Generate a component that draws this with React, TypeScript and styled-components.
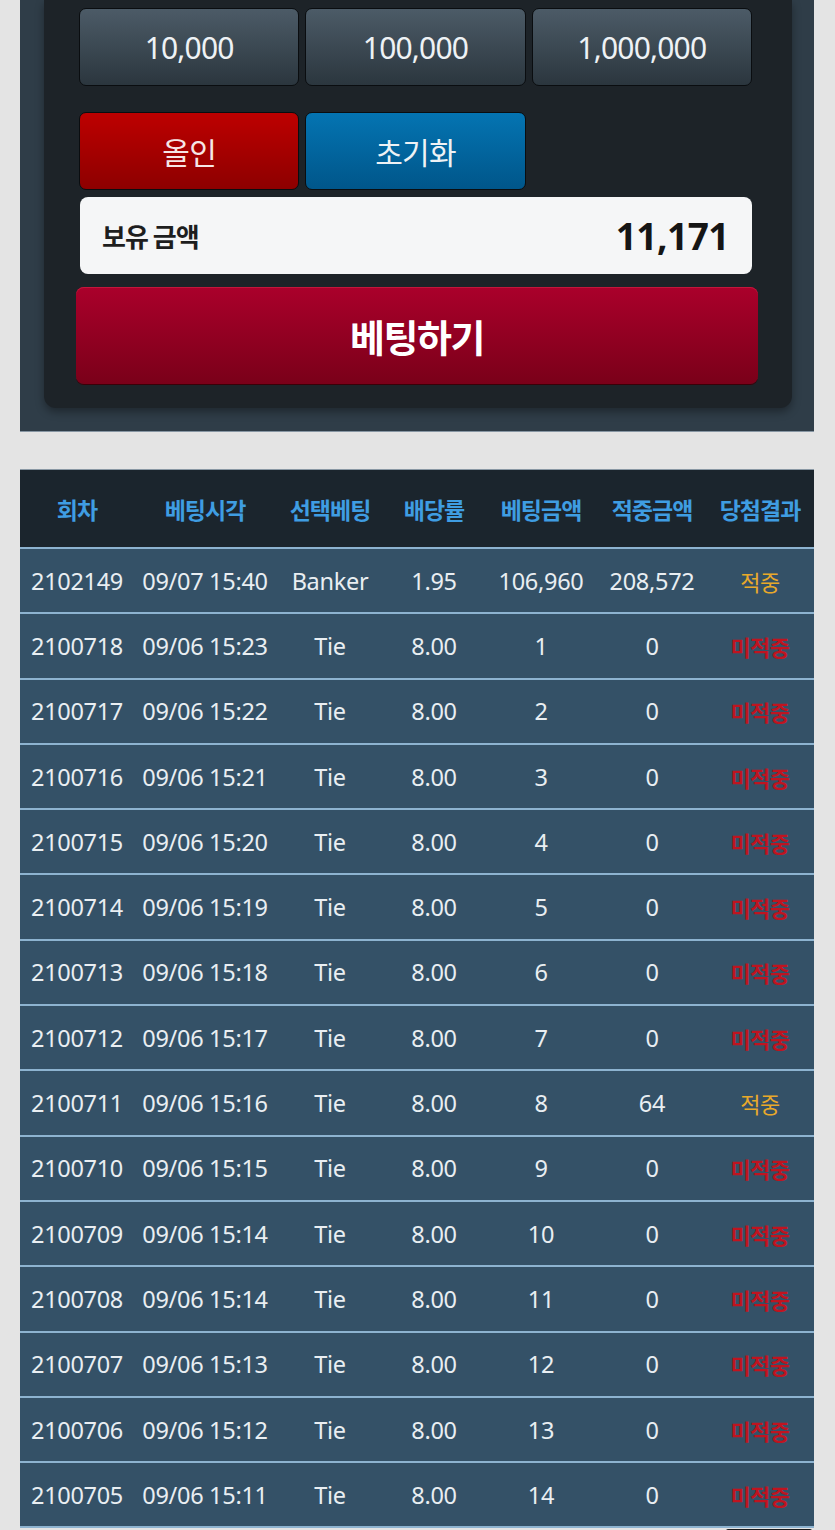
import styled, { createGlobalStyle } from 'styled-components';

const GlobalStyle = createGlobalStyle`
  html, body {
    margin: 0;
    padding: 0;
    background: #e4e4e4;
  }
  body {
    font-family: "Noto Sans", "Noto Sans CJK KR", sans-serif;
  }
`;

const Page = styled.div`
  padding: 0 21px 0 20px;
  background: #e4e4e4;
  min-height: 1530px;
`;

const TopPanel = styled.section`
  background: #2f3d48;
  padding: 0 22px 23px 24px;
  border-bottom: 1px solid #8796a3;
`;

const ControlBox = styled.div`
  background: #1d2328;
  border-radius: 0 0 12px 12px;
  padding: 8px 40px 24px 35px;
  box-shadow: 0 4px 8px rgba(0, 0, 0, 0.35);
`;

const ButtonGrid = styled.div<{ $gap?: number }>`
  display: grid;
  grid-template-columns: repeat(3, 1fr);
  gap: 6px;
  margin-bottom: ${({ $gap }) => $gap ?? 0}px;
`;

const variants = {
  chip: 'linear-gradient(to bottom, #4c5b67 0%, #2b363e 100%)',
  red: 'linear-gradient(to bottom, #bd0000 0%, #8d0000 100%)',
  blue: 'linear-gradient(to bottom, #0474b2 0%, #00568a 100%)',
};

const ChipButton = styled.button<{ $variant: keyof typeof variants }>`
  height: 78px;
  border: 1px solid #0a0d10;
  border-radius: 7px;
  background: ${({ $variant }) => variants[$variant]};
  color: ${({ $variant }) => ($variant === 'red' ? '#f6e6e6' : '#eef2f5')};
  font-family: "Noto Sans", "Noto Sans CJK KR", sans-serif;
  font-size: 30px;
  letter-spacing: -0.8px;
  cursor: pointer;
  padding: 0;
`;

const Holdings = styled.div`
  display: flex;
  align-items: center;
  justify-content: space-between;
  margin: 7px 0 0 1px;
  height: 77px;
  padding: 0 23px 0 22px;
  background: #f5f6f7;
  border-radius: 8px;
  box-sizing: border-box;
`;

const HoldingsLabel = styled.span`
  font-family: "Noto Sans CJK KR", sans-serif;
  font-size: 26px;
  font-weight: 700;
  color: #1e1e1e;
  letter-spacing: -1px;
`;

const HoldingsValue = styled.span`
  font-size: 37px;
  font-weight: 700;
  color: #151515;
  letter-spacing: -0.5px;
`;

const BetButton = styled.button`
  display: block;
  width: calc(100% + 9px);
  margin: 13px 0 0 -3px;
  height: 97px;
  border: none;
  border-radius: 8px;
  background: linear-gradient(to bottom, #aa002b 0%, #7a0019 100%);
  box-shadow: 0 1px 0 #3a0008, inset 0 1px 0 #c3173c;
  color: #ffffff;
  font-family: "Noto Sans CJK KR", sans-serif;
  font-size: 38px;
  font-weight: 700;
  letter-spacing: -1.5px;
  cursor: pointer;
`;

const Table = styled.table`
  width: 100%;
  margin-top: 37px;
  border-collapse: collapse;
  table-layout: fixed;
  border-top: 1px solid #8a98a4;
`;

const HeadCell = styled.th<{ $w: number }>`
  width: ${({ $w }) => $w}px;
  height: 77px;
  padding: 0;
  background: #1b252d;
  color: #3f9de2;
  font-family: "Noto Sans CJK KR", sans-serif;
  font-size: 23px;
  font-weight: 700;
  letter-spacing: -1px;
  text-align: center;
  white-space: nowrap;
  border-bottom: 2px solid #8db3d0;
`;

const Row = styled.tr`
  background: #345167;
  border-bottom: 2px solid #8db3d0;
`;

const Cell = styled.td`
  height: 63.3px;
  padding: 0;
  text-align: center;
  color: #e9eef2;
  font-size: 23.5px;
  letter-spacing: -0.3px;
  white-space: nowrap;
`;

const ResultCell = styled(Cell)<{ $win: boolean }>`
  color: ${({ $win }) => ($win ? '#e9a92a' : '#bf1420')};
  font-family: "Noto Sans CJK KR", sans-serif;
  font-weight: ${({ $win }) => ($win ? 400 : 700)};
  font-size: 22px;
  letter-spacing: -0.5px;
`;

const Footer = styled.div`
  display: flex;
  justify-content: flex-end;
  padding-top: 1px;
`;

const PageBox = styled.div`
  width: 82px;
  height: 40px;
  margin-right: 2px;
  background: #ffffff;
  border: 2px solid #1a1a1a;
  border-radius: 2px;
`;

const columns = [
  { label: '회차', w: 114 },
  { label: '베팅시각', w: 142 },
  { label: '선택베팅', w: 108 },
  { label: '배당률', w: 100 },
  { label: '베팅금액', w: 114 },
  { label: '적중금액', w: 108 },
  { label: '당첨결과', w: 108 },
];

type Bet = {
  round: string;
  time: string;
  pick: string;
  odds: string;
  amount: string;
  payout: string;
  win: boolean;
};

const tieRows: [string, string, string, string, boolean][] = [
  ['2100718', '15:23', '1', '0', false],
  ['2100717', '15:22', '2', '0', false],
  ['2100716', '15:21', '3', '0', false],
  ['2100715', '15:20', '4', '0', false],
  ['2100714', '15:19', '5', '0', false],
  ['2100713', '15:18', '6', '0', false],
  ['2100712', '15:17', '7', '0', false],
  ['2100711', '15:16', '8', '64', true],
  ['2100710', '15:15', '9', '0', false],
  ['2100709', '15:14', '10', '0', false],
  ['2100708', '15:14', '11', '0', false],
  ['2100707', '15:13', '12', '0', false],
  ['2100706', '15:12', '13', '0', false],
  ['2100705', '15:11', '14', '0', false],
];

const bets: Bet[] = [
  { round: '2102149', time: '09/07 15:40', pick: 'Banker', odds: '1.95', amount: '106,960', payout: '208,572', win: true },
  ...tieRows.map(([round, t, amount, payout, win]) => ({
    round,
    time: `09/06 ${t}`,
    pick: 'Tie',
    odds: '8.00',
    amount,
    payout,
    win,
  })),
];

export default function App() {
  return (
    <>
      <GlobalStyle />
      <Page>
        <TopPanel>
          <ControlBox>
            <ButtonGrid $gap={26}>
              <ChipButton $variant="chip">10,000</ChipButton>
              <ChipButton $variant="chip">100,000</ChipButton>
              <ChipButton $variant="chip">1,000,000</ChipButton>
            </ButtonGrid>
            <ButtonGrid>
              <ChipButton $variant="red">올인</ChipButton>
              <ChipButton $variant="blue">초기화</ChipButton>
            </ButtonGrid>
            <Holdings>
              <HoldingsLabel>보유 금액</HoldingsLabel>
              <HoldingsValue>11,171</HoldingsValue>
            </Holdings>
            <BetButton>베팅하기</BetButton>
          </ControlBox>
        </TopPanel>

        <Table>
          <thead>
            <tr>
              {columns.map((c) => (
                <HeadCell key={c.label} $w={c.w}>{c.label}</HeadCell>
              ))}
            </tr>
          </thead>
          <tbody>
            {bets.map((b) => (
              <Row key={b.round}>
                <Cell>{b.round}</Cell>
                <Cell>{b.time}</Cell>
                <Cell>{b.pick}</Cell>
                <Cell>{b.odds}</Cell>
                <Cell>{b.amount}</Cell>
                <Cell>{b.payout}</Cell>
                <ResultCell $win={b.win}>{b.win ? '적중' : '미적중'}</ResultCell>
              </Row>
            ))}
          </tbody>
        </Table>
        <Footer>
          <PageBox />
        </Footer>
      </Page>
    </>
  );
}
